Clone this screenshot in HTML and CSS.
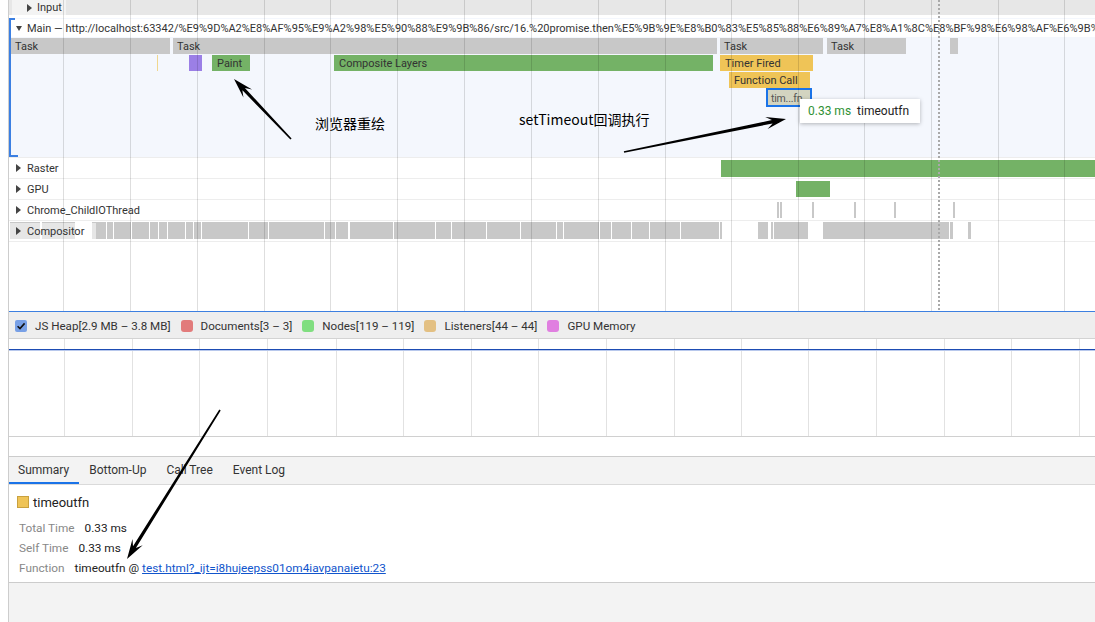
FILE: index.html
```html
<!DOCTYPE html>
<html>
<head>
<meta charset="utf-8">
<title>Performance</title>
<link rel="stylesheet" href="styles.css">
</head>
<body>
<div class="page">
  <div class="panel">
    <div class="timeline">
      <div class="input-row">
        <div class="input-label"><span class="tri-right"></span>Input</div>
      </div>
      <div class="main-group">
        <div class="main-header"><span class="tri-down"></span>Main — http://localhost:63342/%E9%9D%A2%E8%AF%95%E9%A2%98%E5%90%88%E9%9B%86/src/16.%20promise.then%E5%9B%9E%E8%B0%83%E5%85%88%E6%89%A7%E8%A1%8C%E8%BF%98%E6%98%AF%E6%9B%B4%E5%BF%AB.html</div>
        <div class="flame">
          <div class="flame-row">
            <div class="bar task" style="left:0;width:159px">Task</div>
            <div class="bar task" style="left:162px;width:544px">Task</div>
            <div class="bar task" style="left:709px;width:103px">Task</div>
            <div class="bar task" style="left:816px;width:79px">Task</div>
            <div class="bar task" style="left:939px;width:2px"></div>
          </div>
          <div class="flame-row">
            <div class="bar script-faint" style="left:146px;width:1px"></div>
            <div class="bar render" style="left:178px;width:13px"></div>
            <div class="bar paint" style="left:201px;width:38px">Paint</div>
            <div class="bar paint" style="left:323px;width:379px">Composite Layers</div>
            <div class="bar script" style="left:709px;width:93px">Timer Fired</div>
          </div>
          <div class="flame-row">
            <div class="bar script" style="left:718px;width:81px">Function Call</div>
          </div>
          <div class="flame-row">
            <div class="bar selected" style="left:755px;width:46px">tim...fn</div>
          </div>
        </div>
      </div>
      <div class="track">
        <div class="track-label"><span class="tri-right"></span>Raster</div>
        <div class="tbar green" style="left:712px;width:380px;height:17px"></div>
      </div>
      <div class="track">
        <div class="track-label"><span class="tri-right"></span>GPU</div>
        <div class="tbar green" style="left:787px;width:34px"></div>
      </div>
      <div class="track">
        <div class="track-label"><span class="tri-right"></span>Chrome_ChildIOThread</div>
        <div class="tbar gray" style="left:768px;width:2px"></div>
        <div class="tbar gray" style="left:771px;width:2px"></div>
        <div class="tbar gray" style="left:803px;width:2px"></div>
        <div class="tbar gray" style="left:845px;width:2px"></div>
        <div class="tbar gray" style="left:885px;width:2px"></div>
        <div class="tbar gray" style="left:944px;width:2px"></div>
      </div>
      <div class="track last">
        <div class="track-label overlay"><span class="tri-right"></span>Compositor</div>
        <div class="tbar gray comp" style="left:1px;width:30px"></div>
        <div class="tbar gray comp" style="left:33px;width:33px"></div>
        <div class="tbar gray comp" style="left:83px;width:14px"></div>
        <div class="tbar gray comp" style="left:98px;width:6px"></div>
        <div class="tbar gray comp" style="left:105px;width:17px"></div>
        <div class="tbar gray comp" style="left:123px;width:17px"></div>
        <div class="tbar gray comp" style="left:141px;width:8px"></div>
        <div class="tbar gray comp" style="left:150px;width:8px"></div>
        <div class="tbar gray comp" style="left:159px;width:17px"></div>
        <div class="tbar gray comp" style="left:177px;width:7px"></div>
        <div class="tbar gray comp" style="left:185px;width:7px"></div>
        <div class="tbar gray comp" style="left:193px;width:46px"></div>
        <div class="tbar gray comp" style="left:240px;width:19px"></div>
        <div class="tbar gray comp" style="left:260px;width:55px"></div>
        <div class="tbar gray comp" style="left:316px;width:10px"></div>
        <div class="tbar gray comp" style="left:327px;width:12px"></div>
        <div class="tbar gray comp" style="left:341px;width:43px"></div>
        <div class="tbar gray comp" style="left:385px;width:41px"></div>
        <div class="tbar gray comp" style="left:427px;width:15px"></div>
        <div class="tbar gray comp" style="left:443px;width:34px"></div>
        <div class="tbar gray comp" style="left:478px;width:33px"></div>
        <div class="tbar gray comp" style="left:512px;width:35px"></div>
        <div class="tbar gray comp" style="left:548px;width:6px"></div>
        <div class="tbar gray comp" style="left:555px;width:35px"></div>
        <div class="tbar gray comp" style="left:591px;width:11px"></div>
        <div class="tbar gray comp" style="left:603px;width:19px"></div>
        <div class="tbar gray comp" style="left:623px;width:17px"></div>
        <div class="tbar gray comp" style="left:641px;width:30px"></div>
        <div class="tbar gray comp" style="left:672px;width:38px"></div>
        <div class="tbar gray comp" style="left:711px;width:2px"></div>
        <div class="tbar gray comp" style="left:749px;width:10px"></div>
        <div class="tbar gray comp" style="left:762px;width:2px"></div>
        <div class="tbar gray comp" style="left:765px;width:34px"></div>
        <div class="tbar gray comp" style="left:814px;width:126px"></div>
        <div class="tbar gray comp" style="left:941px;width:3px"></div>
        <div class="tbar gray comp" style="left:959px;width:3px"></div>
      </div>

      <svg class="grid" width="1086" height="311" viewBox="9 0 1086 311">
        <g stroke="rgba(0,0,0,0.13)" stroke-width="1">
          <line x1="63.5" y1="0" x2="63.5" y2="311"/>
          <line x1="130.5" y1="0" x2="130.5" y2="311"/>
          <line x1="197.5" y1="0" x2="197.5" y2="311"/>
          <line x1="264.5" y1="0" x2="264.5" y2="311"/>
          <line x1="330.5" y1="0" x2="330.5" y2="311"/>
          <line x1="397.5" y1="0" x2="397.5" y2="311"/>
          <line x1="464.5" y1="0" x2="464.5" y2="311"/>
          <line x1="531.5" y1="0" x2="531.5" y2="311"/>
          <line x1="598.5" y1="0" x2="598.5" y2="311"/>
          <line x1="665.5" y1="0" x2="665.5" y2="311"/>
          <line x1="731.5" y1="0" x2="731.5" y2="311"/>
          <line x1="798.5" y1="0" x2="798.5" y2="311"/>
          <line x1="864.5" y1="0" x2="864.5" y2="311"/>
          <line x1="931.5" y1="0" x2="931.5" y2="311"/>
          <line x1="998.5" y1="0" x2="998.5" y2="311"/>
          <line x1="1064.5" y1="0" x2="1064.5" y2="311"/>
        </g>
        <line x1="939" y1="0" x2="939" y2="311" stroke="#a9a9a9" stroke-width="2" stroke-dasharray="2 2"/>
      </svg>

      <div class="tooltip"><span class="ms">0.33 ms</span>timeoutfn</div>
    </div>

    <div class="memory">
      <div class="legend">
        <span class="cb"><svg width="12" height="12" viewBox="0 0 12 12"><path d="M2.6 6.2 L5 8.6 L9.6 3.4" fill="none" stroke="#111" stroke-width="1.6"/></svg></span>
        <span class="legend-text">JS Heap[2.9 MB – 3.8 MB]</span>
        <span class="swatch docs"></span>
        <span class="legend-text">Documents[3 – 3]</span>
        <span class="swatch nodes"></span>
        <span class="legend-text">Nodes[119 – 119]</span>
        <span class="swatch listeners"></span>
        <span class="legend-text">Listeners[44 – 44]</span>
        <span class="swatch gpu"></span>
        <span class="legend-text">GPU Memory</span>
      </div>
      <div class="mem-chart">
        <svg width="1086" height="97" viewBox="9 339 1086 97">
          <g stroke="#e2e2e2" stroke-width="1">
            <line x1="64.5" y1="339" x2="64.5" y2="436"/>
            <line x1="132.5" y1="339" x2="132.5" y2="436"/>
            <line x1="199.5" y1="339" x2="199.5" y2="436"/>
            <line x1="267.5" y1="339" x2="267.5" y2="436"/>
            <line x1="336.5" y1="339" x2="336.5" y2="436"/>
            <line x1="403.5" y1="339" x2="403.5" y2="436"/>
            <line x1="471.5" y1="339" x2="471.5" y2="436"/>
            <line x1="538.5" y1="339" x2="538.5" y2="436"/>
            <line x1="606.5" y1="339" x2="606.5" y2="436"/>
            <line x1="674.5" y1="339" x2="674.5" y2="436"/>
            <line x1="741.5" y1="339" x2="741.5" y2="436"/>
            <line x1="808.5" y1="339" x2="808.5" y2="436"/>
            <line x1="876.5" y1="339" x2="876.5" y2="436"/>
            <line x1="944.5" y1="339" x2="944.5" y2="436"/>
            <line x1="1011.5" y1="339" x2="1011.5" y2="436"/>
            <line x1="1079.5" y1="339" x2="1079.5" y2="436"/>
          </g>
          <line x1="9" y1="349.5" x2="1095" y2="349.5" stroke="#1d4cb3" stroke-width="1"/>
          <line x1="9" y1="350.5" x2="1095" y2="350.5" stroke="#b8c8ec" stroke-width="1"/>
        </svg>
      </div>
    </div>

    <div class="splitter"></div>

    <div class="tabs">
      <div class="tab active">Summary</div>
      <div class="tab">Bottom-Up</div>
      <div class="tab">Call Tree</div>
      <div class="tab">Event Log</div>
    </div>

    <div class="summary">
      <div class="summary-title"><span class="cat-square"></span>timeoutfn</div>
      <div class="details">
        <div class="detail-row"><span class="detail-label">Total Time</span><span>0.33 ms</span></div>
        <div class="detail-row"><span class="detail-label">Self Time</span><span>0.33 ms</span></div>
        <div class="detail-row"><span class="detail-label">Function</span><span>timeoutfn @ <a class="link" href="#">test.html?_ijt=i8hujeepss01om4iavpanaietu:23</a></span></div>
      </div>
    </div>

    <div class="footer"></div>
  </div>

  <div class="note note-repaint">浏览器重绘</div>
  <div class="note note-timeout">setTimeout回调执行</div>

  <svg class="arrows" width="1095" height="622" viewBox="0 0 1095 622">
    <polygon points="291.6,138.5 244.9,88.0 252.1,89.4 234,79 243.4,97.6 242.4,90.3 290.4,139.6" fill="#000"/>
    <polygon points="624.2,152.8 772.6,123.5 767.6,128.9 786,119 765.2,117.1 771.9,120.1 623.8,151.2" fill="#000"/>
    <polygon points="220.7,410.4 135.9,548.0 142.7,545.2 127,559 132.5,538.9 133.0,546.2 219.3,409.6" fill="#000"/>
  </svg>
</div>
</body>
</html>
```

FILE: styles.css
```css
* { box-sizing: border-box; }

html, body {
  margin: 0;
  padding: 0;
  background: #fff;
}

body {
  font-family: Roboto, "Noto Sans", sans-serif;
  color: #333;
}

.page {
  position: relative;
  width: 1095px;
  height: 622px;
  overflow: hidden;
  padding-left: 8px;
}

.panel {
  width: 1087px;
  height: 622px;
  border-left: 1px solid #cdcdcd;
  display: flex;
  flex-direction: column;
}

/* ---------- timeline ---------- */
.timeline {
  position: relative;
  height: 311px;
  flex: none;
  overflow: hidden;
}

.input-row {
  height: 15px;
  background: #e7e7e7;
  display: flex;
}

.input-label {
  margin-left: 3px;
  padding: 0 4px 0 15px;
  background: #f3f3f3;
  font-size: 11px;
  line-height: 15px;
  display: flex;
  align-items: center;
  color: #333;
}

.tri-right {
  display: inline-block;
  width: 0;
  height: 0;
  border-left: 5px solid #444;
  border-top: 4px solid transparent;
  border-bottom: 4px solid transparent;
  margin-right: 6px;
}

.input-label .tri-right { margin-right: 5px; }

.tri-down {
  display: inline-block;
  width: 0;
  height: 0;
  border-top: 5px solid #444;
  border-left: 3px solid transparent;
  border-right: 3px solid transparent;
  margin-right: 5px;
}

.main-group {
  position: relative;
  margin-top: 3px;
  height: 139px;
  border-left: 2px solid #3b7fe2;
  background: #f4f7fd;
  padding-top: 1px;
}

.main-group::before {
  content: "";
  position: absolute;
  left: -2px;
  top: 0;
  width: 6px;
  height: 2px;
  background: #3b7fe2;
}

.main-group::after {
  content: "";
  position: absolute;
  left: -2px;
  bottom: 0;
  width: 9px;
  height: 2px;
  background: #3b7fe2;
}

.main-header {
  height: 18px;
  background: #fff;
  display: flex;
  align-items: center;
  padding-left: 5px;
  font-size: 11px;
  white-space: nowrap;
  overflow: hidden;
  color: #333;
}

.flame { margin-top: 1px; }

.flame-row {
  position: relative;
  height: 17px;
}

.bar {
  position: absolute;
  top: 0;
  height: 16px;
  font-size: 11px;
  line-height: 16px;
  padding: 1px 4px 0;
  white-space: nowrap;
  overflow: hidden;
  color: #333;
}

.task { background: #c8c8c8; }
.paint { background: #74b266; padding-left: 5px; }
.render { background: #9b7fe6; }
.script { background: #efc457; padding-left: 5px; }
.script-faint { background: #f0d78e; padding: 0; }

.selected {
  top: -1px;
  height: 19px;
  background: #d3d4c0;
  border: 2px solid #1a73e8;
  font-size: 10.5px;
  letter-spacing: -0.2px;
  line-height: 15px;
  padding: 1px 2px 0 3px;
  color: #555;
}

.track {
  position: relative;
  height: 21px;
  border-top: 1px solid #ededed;
  display: flex;
  align-items: center;
}

.track.last { height: 22px; border-bottom: 1px solid #ededed; }

.track-label {
  position: relative;
  z-index: 1;
  display: flex;
  align-items: center;
  height: 17px;
  padding: 0 4px 0 7px;
  font-size: 11px;
  color: #333;
}

.track-label.overlay {
  margin-left: 1px;
  padding: 0 12px 0 6px;
  background: rgba(255, 255, 255, 0.55);
}

.tbar {
  position: absolute;
  top: 2px;
  height: 16px;
}

.tbar.comp { top: 1px; height: 17px; }

.green { background: #74b266; }
.gray { background: #c8c8c8; }

.grid {
  position: absolute;
  left: 0;
  top: 0;
  z-index: 2;
  pointer-events: none;
}

.tooltip {
  position: absolute;
  z-index: 3;
  left: 791px;
  top: 99px;
  height: 24px;
  line-height: 24px;
  padding: 0 11px 0 8px;
  background: #fff;
  font-size: 12px;
  color: #222;
  white-space: nowrap;
  box-shadow: 0 1px 4px rgba(0, 0, 0, 0.28);
}

.tooltip .ms {
  color: #2f9134;
  margin-right: 6px;
}

/* ---------- memory ---------- */
.memory {
  flex: none;
  border-top: 1px solid #3d7fe0;
}

.legend {
  height: 27px;
  background: #eeeeee;
  border-bottom: 1px solid #d3d3d3;
  display: flex;
  align-items: center;
  padding: 2px 0 0 6px;
  font-size: 11.6px;
  color: #333;
  white-space: nowrap;
}

.cb {
  width: 12px;
  height: 12px;
  border-radius: 2px;
  background: #78a0e6;
  margin-right: 8px;
  display: flex;
}

.swatch {
  width: 12px;
  height: 12px;
  border-radius: 3px;
  margin-right: 8px;
}

.docs { background: #e27b7b; }
.nodes { background: #80de80; }
.listeners { background: #e3c083; }
.gpu { background: #e07fe0; }

.legend-text { margin-right: 10px; }

.mem-chart {
  height: 98px;
  border-bottom: 1px solid #d0d0d0;
  overflow: hidden;
}

.mem-chart svg { display: block; }

.splitter {
  flex: none;
  height: 20px;
  border-bottom: 1px solid #cccccc;
}

/* ---------- tabs ---------- */
.tabs {
  flex: none;
  height: 28px;
  background: #f3f3f3;
  border-bottom: 1px solid #dadada;
  display: flex;
}

.tab {
  position: relative;
  padding: 0 10px 0 9px;
  font-size: 12px;
  line-height: 27px;
  color: #333;
}

.tab + .tab { padding-left: 10px; }

.tab.active::after {
  content: "";
  position: absolute;
  left: 0;
  right: 0;
  bottom: 0;
  height: 2px;
  background: #1a73e8;
}

/* ---------- summary ---------- */
.summary {
  flex: none;
  height: 98px;
  border-bottom: 1px solid #cccccc;
  padding: 9px 8px 0 8px;
}

.summary-title {
  display: flex;
  align-items: center;
  height: 16px;
  font-size: 13px;
  color: #222;
}

.cat-square {
  width: 12px;
  height: 12px;
  background: #efc457;
  border: 1px solid #c9a13f;
  margin-right: 4px;
}

.details {
  margin-top: 8px;
  padding-left: 2px;
}

.detail-row {
  height: 20px;
  line-height: 20px;
  font-size: 11.8px;
  color: #222;
  white-space: nowrap;
}

.detail-label {
  color: #888;
  margin-right: 10px;
}

.link {
  color: #1155cc;
  text-decoration: underline;
}

.footer {
  flex: 1;
  background: #f3f3f3;
}

/* ---------- annotations ---------- */
.note {
  position: absolute;
  z-index: 5;
  font-family: "Noto Sans CJK SC", "Noto Sans", sans-serif;
  font-size: 14px;
  line-height: 16px;
  color: #000;
  white-space: nowrap;
}

.note-repaint { left: 315px; top: 115px; }
.note-timeout { left: 519px; top: 111px; }

.arrows {
  position: absolute;
  left: 0;
  top: 0;
  z-index: 6;
  pointer-events: none;
}
```
